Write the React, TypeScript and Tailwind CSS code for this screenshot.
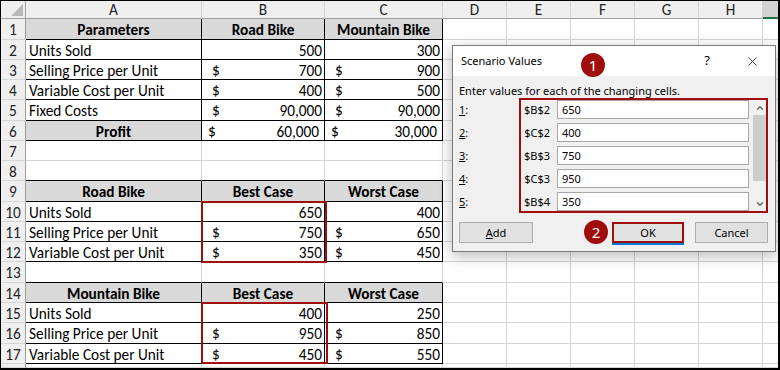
import React from "react";
import { X, ChevronUp, ChevronDown } from "lucide-react";

type Cell = { t: "text" | "bold" | "num" | "acc" | "acc2"; v: string; fill?: boolean } | null;

const COLW = ["w-[176px]", "w-[123px]", "w-[118px]", "w-[64px]", "w-[64px]", "w-[64px]", "w-[64px]", "w-[64px]", "flex-1"];
const LETTERS = ["A", "B", "C", "D", "E", "F", "G", "H", ""];

const ROWH = [
  "h-[21px]", "h-[20px]", "h-[20px]", "h-[20px]", "h-[21px]", "h-[20px]", "h-[20px]", "h-[20px]", "h-[21px]",
  "h-[20px]", "h-[20px]", "h-[20px]", "h-[21px]", "h-[20px]", "h-[20px]", "h-[21px]", "h-[20px]", "flex-1",
];

const T = (v: string): Cell => ({ t: "text", v });
const B = (v: string): Cell => ({ t: "bold", v, fill: true });
const N = (v: string): Cell => ({ t: "num", v });
const A = (v: string): Cell => ({ t: "acc", v });
const A2 = (v: string): Cell => ({ t: "acc2", v });

const DATA: Cell[][] = [
  [B("Parameters"), B("Road Bike"), B("Mountain Bike")],
  [T("Units Sold"), N("500"), N("300")],
  [T("Selling Price per Unit"), A("700"), A("900")],
  [T("Variable Cost per Unit"), A("400"), A("500")],
  [T("Fixed Costs"), A("90,000"), A("90,000")],
  [B("Profit"), A2("60,000"), A2("30,000")],
  [null, null, null],
  [null, null, null],
  [B("Road Bike"), B("Best Case"), B("Worst Case")],
  [T("Units Sold"), N("650"), N("400")],
  [T("Selling Price per Unit"), A("750"), A("650")],
  [T("Variable Cost per Unit"), A("350"), A("450")],
  [null, null, null],
  [B("Mountain Bike"), B("Best Case"), B("Worst Case")],
  [T("Units Sold"), N("400"), N("250")],
  [T("Selling Price per Unit"), A("950"), A("850")],
  [T("Variable Cost per Unit"), A("450"), A("550")],
  [null, null, null],
];

const inTable = (r: number) => (r >= 0 && r <= 5) || (r >= 8 && r <= 11) || (r >= 13 && r <= 16);
const aboveTable = (r: number) => r === 7 || r === 12;

function CellContent({ c }: { c: Cell }) {
  if (!c) return null;
  if (c.t === "text") return <span className="pl-[3px] whitespace-nowrap">{c.v}</span>;
  if (c.t === "bold") return <span className="w-full text-center font-bold whitespace-nowrap">{c.v}</span>;
  if (c.t === "num") return <span className="w-full text-right pr-[2px]">{c.v}</span>;
  if (c.t === "acc")
    return (
      <span className="w-full flex justify-between pl-[10px] pr-[2px]">
        <span>$</span>
        <span>{c.v}</span>
      </span>
    );
  return (
    <span className="w-full flex justify-between pl-[6px] pr-[5px]">
      <span>$</span>
      <span>{c.v}</span>
    </span>
  );
}

function Sheet() {
  return (
    <div className="flex flex-col h-full font-['Carlito','Lato',sans-serif] text-[15.3px] text-black">
      <div className="flex h-[18px] shrink-0">
        <div className="w-[25px] shrink-0 bg-[#efefef] border-r border-b border-[#9e9e9e] relative">
          <div className="absolute right-[2px] bottom-[2px] w-0 h-0 border-l-[12px] border-l-transparent border-b-[12px] border-b-[#b9b9b9]" />
        </div>
        {LETTERS.map((l, i) =>
          i === 8 ? (
            <div key={i} className="flex-1 bg-[#d2d2d2] border-b-2 border-[#217346]" />
          ) : (
            <div
              key={i}
              className={`${COLW[i]} shrink-0 bg-[#efefef] border-r border-r-[#d0d0d0] border-b border-b-[#9e9e9e] flex items-center justify-center leading-none text-[#222]`}
            >
              {l}
            </div>
          )
        )}
      </div>
      {DATA.map((row, r) => (
        <div key={r} className={`flex ${ROWH[r]} ${r === 17 ? "" : "shrink-0"}`}>
          <div className="w-[25px] shrink-0 bg-[#efefef] border-r border-r-[#9e9e9e] border-b border-b-[#d5d5d5] flex items-center justify-center leading-none text-[#222] pt-[2px]">
            {r < 17 ? r + 1 : ""}
          </div>
          {COLW.map((w, c) => {
            const tbl = c < 3 && inTable(r);
            const above = c < 3 && aboveTable(r);
            const cell = c < 3 ? row[c] : null;
            let border = "border-r border-b border-[#d4d4d4]";
            if (tbl) border = "border-r border-b border-black";
            else if (above) border = "border-r border-b border-r-[#d4d4d4] border-b-black";
            if (c === 8) border = "border-b border-[#d4d4d4]";
            const fill = cell && cell.fill ? "bg-[#d9d9d9]" : "bg-white";
            return (
              <div key={c} className={`${w} ${c === 8 ? "" : "shrink-0"} ${border} ${fill} flex items-center leading-none overflow-hidden pt-[2px]`}>
                <CellContent c={cell} />
              </div>
            );
          })}
        </div>
      ))}
    </div>
  );
}

function Dialog() {
  const rows = [
    ["1", "$B$2", "650"],
    ["2", "$C$2", "400"],
    ["3", "$B$3", "750"],
    ["4", "$C$3", "950"],
    ["5", "$B$4", "350"],
  ];
  return (
    <div className="absolute left-[451px] top-[44px] w-[324px] h-[207px] border border-[#7a7a7a] bg-[#f0f0f0] shadow-[0_4px_14px_rgba(0,0,0,0.28)] flex flex-col font-['Noto_Sans',sans-serif] text-[11px] text-black">
      <div className="h-[30px] bg-white flex items-center pl-[8px] shrink-0">
        <span className="flex-1">Scenario Values</span>
        <span className="w-[20px] text-center text-[13px] mr-[28px]">?</span>
        <X size={15} strokeWidth={1.1} className="mr-[15px]" />
      </div>
      <div className="flex flex-col pl-[6px] pr-[7px] pt-[8px]">
        <div className="h-[14px] leading-[14px] whitespace-nowrap">Enter values for each of the changing cells.</div>
        <div className="flex">
          <div className="w-[61px] flex flex-col gap-[4px] pt-[2px]">
            {rows.map((r) => (
              <div key={r[0]} className="h-[19px] flex items-center leading-none">
                <span className="underline">{r[0]}</span>:
              </div>
            ))}
          </div>
          <div className="w-[249px] h-[115px] border-2 border-[#a00d0d] flex">
            <div className="flex flex-col gap-[4px] w-[228px]">
              {rows.map((r) => (
                <div key={r[0]} className="flex h-[19px] items-center">
                  <span className="w-[36px] text-right pr-[7px] leading-none">{r[1]}</span>
                  <div className="w-[192px] h-[19px] bg-white border border-[#a8a8a8] flex items-center pl-[4px] leading-none">
                    {r[2]}
                  </div>
                </div>
              ))}
            </div>
            <div className="ml-[4px] w-[13px] flex flex-col bg-[#f0f0f0]">
              <div className="h-[15px] flex items-center justify-center text-[#606060]">
                <ChevronUp size={10} strokeWidth={3} />
              </div>
              <div className="h-[66px] bg-[#cdcdcd]" />
              <div className="flex-1" />
              <div className="h-[15px] flex items-center justify-center text-[#606060]">
                <ChevronDown size={10} strokeWidth={3} />
              </div>
            </div>
          </div>
        </div>
        <div className="flex mt-[9px]">
          <div className="w-[74px] h-[21px] bg-[#e1e1e1] border border-[#adadad] flex items-center justify-center leading-none">
            <span className="underline">A</span>dd
          </div>
          <div className="ml-[79px] w-[72px] h-[21px] bg-[#e1e1e1] border-2 border-[#a00d0d] shadow-[0_2px_0_#0078d7] flex items-center justify-center leading-none">
            OK
          </div>
          <div className="ml-[11px] w-[73px] h-[21px] bg-[#e1e1e1] border border-[#adadad] flex items-center justify-center leading-none">
            Cancel
          </div>
        </div>
      </div>
    </div>
  );
}

function Badge({ n, cls }: { n: string; cls: string }) {
  return (
    <div className={`absolute ${cls} w-[24px] h-[24px] rounded-full bg-[#a00d0d] text-white flex items-center justify-center font-['Noto_Sans',sans-serif] text-[15px] leading-none`}>
      {n}
    </div>
  );
}

export default function App() {
  return (
    <div className="relative w-[780px] h-[370px] overflow-hidden bg-white border-t border-l border-r-2 border-b-2 border-black">
      <Sheet />
      <div className="absolute left-[200px] top-[200px] w-[126px] h-[62px] border-2 border-[#a00d0d]" />
      <div className="absolute left-[200px] top-[301px] w-[127px] h-[62px] border-2 border-[#a00d0d]" />
      <Dialog />
      <Badge n="1" cls="left-[580px] top-[52px]" />
      <Badge n="2" cls="left-[583px] top-[219px]" />
    </div>
  );
}
